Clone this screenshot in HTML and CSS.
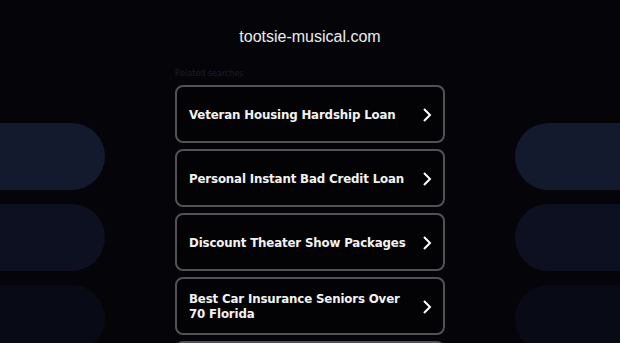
FILE: index.html
```html
<!DOCTYPE html>
<html>
<head>
    <title>tootsie-musical.com</title>
    <link rel="stylesheet" href="styles.css">
</head>
<body>
    <div class="page">
        <div class="side side-left">
            <div class="pill pill-1"></div>
            <div class="pill pill-2"></div>
            <div class="pill pill-3"></div>
        </div>

        <div class="main">
            <h1 class="domain">tootsie-musical.com</h1>
            <div class="related">Related searches</div>

            <div class="links">
                <a class="link" href="#">
                    <span class="link-text">Veteran Housing Hardship Loan</span>
                    <svg class="chevron" width="10" height="16" viewBox="0 0 10 16"><path d="M2 2 L8 8 L2 14" fill="none" stroke="#fff" stroke-width="2"/></svg>
                </a>
                <a class="link" href="#">
                    <span class="link-text">Personal Instant Bad Credit Loan</span>
                    <svg class="chevron" width="10" height="16" viewBox="0 0 10 16"><path d="M2 2 L8 8 L2 14" fill="none" stroke="#fff" stroke-width="2"/></svg>
                </a>
                <a class="link" href="#">
                    <span class="link-text">Discount Theater Show Packages</span>
                    <svg class="chevron" width="10" height="16" viewBox="0 0 10 16"><path d="M2 2 L8 8 L2 14" fill="none" stroke="#fff" stroke-width="2"/></svg>
                </a>
                <a class="link" href="#">
                    <span class="link-text">Best Car Insurance Seniors Over 70 Florida</span>
                    <svg class="chevron" width="10" height="16" viewBox="0 0 10 16"><path d="M2 2 L8 8 L2 14" fill="none" stroke="#fff" stroke-width="2"/></svg>
                </a>
                <a class="link" href="#">
                    <span class="link-text">Broadway Tickets Discount</span>
                    <svg class="chevron" width="10" height="16" viewBox="0 0 10 16"><path d="M2 2 L8 8 L2 14" fill="none" stroke="#fff" stroke-width="2"/></svg>
                </a>
            </div>
        </div>

        <div class="side side-right">
            <div class="pill pill-1"></div>
            <div class="pill pill-2"></div>
            <div class="pill pill-3"></div>
        </div>
    </div>
</body>
</html>
```

FILE: styles.css
```css
body, html {
    margin: 0;
    height: 100%;
    overflow: hidden;
    background-color: #050509;
    font-family: "DejaVu Sans", Verdana, sans-serif;
}

.page {
    display: grid;
    grid-template-columns: 105px 270px 105px;
    justify-content: space-between;
    column-gap: 70px;
}

/* decorative pills at the sides */
.side {
    display: flex;
    flex-direction: column;
    gap: 14px;
    padding-top: 123px;
}

.pill {
    height: 67px;
}

.side-left .pill {
    border-radius: 0 34px 34px 0;
}

.side-right .pill {
    border-radius: 34px 0 0 34px;
}

.pill-1 {
    background-color: #141a2e;
}

.pill-2 {
    background-color: #0d1021;
}

.pill-3 {
    background-color: #080a16;
}

.main {
    display: flex;
    flex-direction: column;
    padding-top: 28px;
}

.domain {
    margin: 0;
    text-align: center;
    font-family: "Liberation Sans", Arial, sans-serif;
    font-size: 16px;
    line-height: 18px;
    font-weight: normal;
    color: #ececec;
}

.related {
    margin-top: 22px;
    margin-bottom: 6px;
    font-size: 8px;
    line-height: 11px;
    color: #1c1d2b;
}

.links {
    display: flex;
    flex-direction: column;
    gap: 6px;
}

.link {
    box-sizing: border-box;
    height: 58px;
    display: flex;
    align-items: center;
    padding: 2px 11px 0 12px;
    border: 2px solid #515157;
    border-radius: 8px;
    background-color: #030306;
    text-decoration: none;
    color: #f2f2f2;
}

.link-text {
    flex: 1;
    margin-right: 8px;
    font-size: 11.8px;
    font-weight: bold;
    line-height: 15px;
    letter-spacing: -0.15px;
}

.chevron {
    flex-shrink: 0;
}
```
